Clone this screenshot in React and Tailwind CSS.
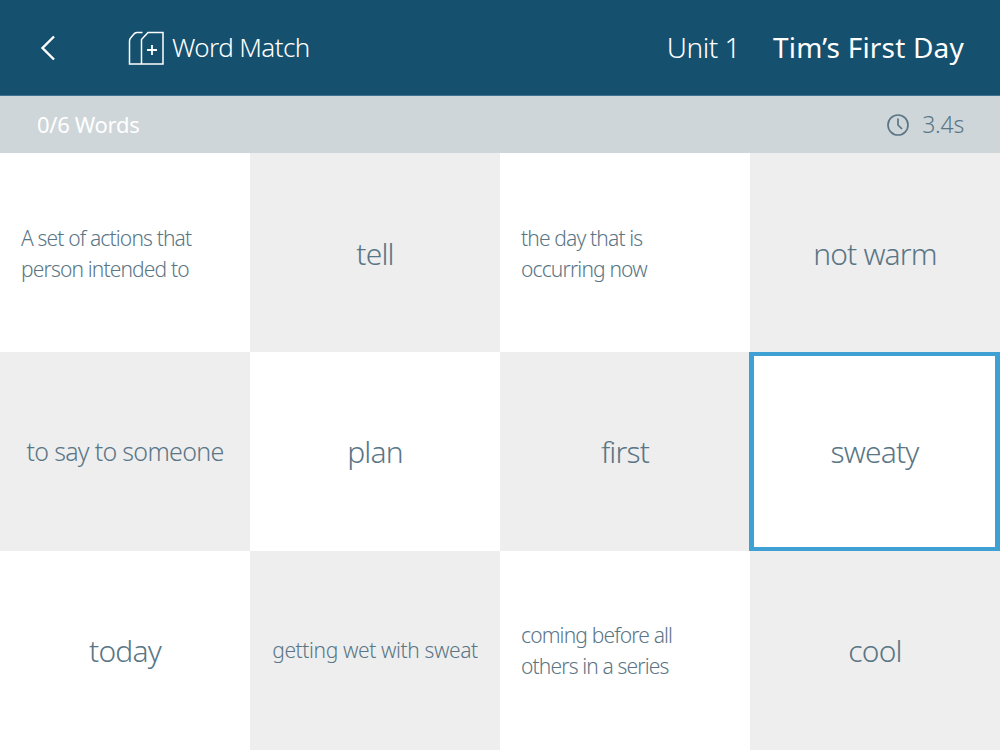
import React from "react";

const cells = [
  { text: "A set of actions that person intended to", size: "small", left: true, row1: true },
  { text: "tell", grey: true, row1: true },
  { text: "the day that is occurring now", size: "small", left: true, row1: true },
  { text: "not warm", grey: true, row1: true },
  { text: "to say to someone", size: "medium", grey: true },
  { text: "plan" },
  { text: "first", grey: true },
  { text: "sweaty", selected: true },
  { text: "today" },
  { text: "getting wet with sweat", size: "wide", grey: true },
  { text: "coming before all others in a series", size: "small", left: true },
  { text: "cool", grey: true },
];

const sizes = {
  small: "text-[21px] leading-[31px] tracking-[-0.85px] ",
  wide: "text-[21px] leading-[31px] tracking-[-0.4px] ",
  medium: "text-[25px] leading-[31px] tracking-[-0.7px] ",
  big: "text-[30px] tracking-[-0.85px] ",
};

const Cell = ({ cell }) => {
  let cls = "flex items-center text-[#5a7686] font-light ";
  cls += cell.grey ? "bg-[#eeeeee] " : "bg-white ";
  cls += cell.left ? "justify-start text-left pl-[21px] pr-[40px] " : "justify-center text-center ";
  cls += sizes[cell.size || "big"];
  if (cell.row1) cls += cell.left ? "pt-[3px] " : "pt-[2px] ";
  if (cell.selected) cls += "-ml-px border-y-[4px] border-x-[5px] border-[#3fa0d4] ";
  return <div className={cls}>{cell.text}</div>;
};

export default function App() {
  return (
    <div className="w-[1000px] h-[750px] overflow-hidden flex flex-col bg-white font-['Noto_Sans',sans-serif]">
      <header className="h-[96px] bg-[#16506f] border-b border-[#3f7391] flex items-center text-white">
        <svg width="18" height="28" viewBox="0 0 18 28" fill="none" stroke="#fff" strokeWidth="2.4" className="ml-[39px]">
          <path d="M15 2.5 L3.5 14 L15 25.5" />
        </svg>
        <svg width="36" height="36" viewBox="0 0 36 36" fill="none" stroke="#fff" strokeWidth="1.5" className="ml-[71px]">
          <path d="M14.5 2.5 H9 Q7 2.5 5.5 4.5 L3 7.5 Q1.5 9 1.5 11 V34 H13" />
          <path d="M13.5 34 V9.5 L20 2.5 H35 V34 Z" />
          <path d="M19 20 H29 M24 15 V25" strokeWidth="1.8" />
        </svg>
        <span className="ml-[8px] text-[26px] font-light tracking-[-0.6px]">Word Match</span>
        <span className="ml-auto -mt-[2px] text-[28px] font-light tracking-[-0.5px]">Unit 1</span>
        <span className="ml-[33px] mr-[36px] -mt-[2px] text-[28px] font-normal tracking-[0.2px]">Tim’s First Day</span>
      </header>
      <div className="h-[57px] bg-[#cfd6d9] flex items-center justify-between pl-[37px] pr-[36px]">
        <span className="text-white text-[22px] tracking-[-0.3px]">0/6 Words</span>
        <div className="flex items-center gap-[12px] text-[#5a7686]">
          <svg width="24" height="24" viewBox="0 0 24 24" fill="none" stroke="#5a7686" strokeWidth="1.7">
            <circle cx="12" cy="12" r="10" />
            <path d="M12 5.5 V12 L16 16" />
          </svg>
          <span className="text-[23px] font-light tracking-[-0.2px]">3.4s</span>
        </div>
      </div>
      <main className="flex-1 grid grid-cols-4 grid-rows-3">
        {cells.map((cell) => (
          <Cell key={cell.text} cell={cell} />
        ))}
      </main>
    </div>
  );
}
